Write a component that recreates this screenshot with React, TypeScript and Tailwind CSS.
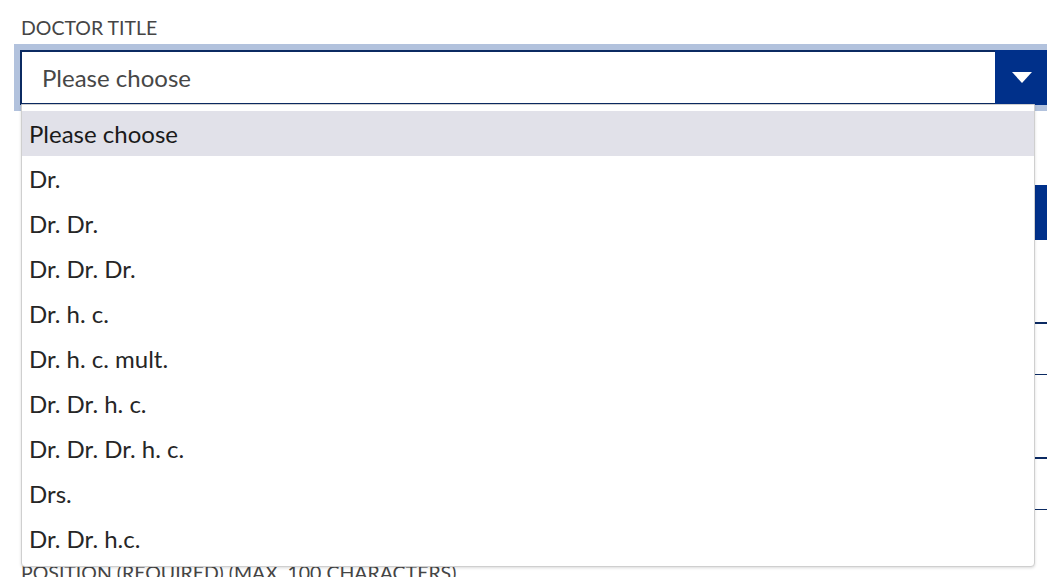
const options = [
  "Please choose",
  "Dr.",
  "Dr. Dr.",
  "Dr. Dr. Dr.",
  "Dr. h. c.",
  "Dr. h. c. mult.",
  "Dr. Dr. h. c.",
  "Dr. Dr. Dr. h. c.",
  "Drs.",
  "Dr. Dr. h.c.",
];

function FieldBox() {
  return <div className="ml-[40px] h-[53px] border-t-2 border-b border-[#0b2a62]" />;
}

export default function App() {
  return (
    <div className="relative h-[577px] w-full overflow-hidden bg-white font-['Lato','Liberation_Sans',sans-serif]">
      <div className="w-[1054px] shrink-0 pl-[20px]">
        <label className="block pl-px pt-[16px] text-[19.5px] leading-[24px] text-[#454545]">
          DOCTOR TITLE
        </label>

        {/* select with focus ring */}
        <div className="mt-[4px] -ml-[6px] border-[6px] border-[#b2c2dd]">
          <div className="flex h-[55px] border-2 border-r-0 border-[#0b2a62]">
            <div className="flex flex-1 items-center pl-[20px] text-[24px] text-[#474747]">
              Please choose
            </div>
            <div className="-my-[2px] flex w-[53px] items-center justify-center bg-[#00308a]">
              <svg width="20" height="11" viewBox="0 0 20 11">
                <path d="M0 0 H20 L10 11 Z" fill="#ffffff" />
              </svg>
            </div>
          </div>
        </div>

        {/* fields underneath the open list */}
        <div className="ml-auto mt-[74px] h-[55px] w-[320px] bg-[#00308a]" />
        <div className="mt-[82px]">
          <FieldBox />
        </div>
        <div className="mt-[82px]">
          <FieldBox />
        </div>
        <label className="mt-[51px] block pl-px text-[19.5px] leading-[24px] text-[#454545]">
          POSITION (REQUIRED) (MAX. 100 CHARACTERS)
        </label>
      </div>

      {/* open dropdown list */}
      <ul className="absolute left-[21px] top-[104px] w-[1014px] rounded-b-[4px] border border-[#cfcfcf] bg-white pt-[6px] pb-[5px] shadow-[0_1px_3px_rgba(0,0,0,0.15)]">
        {options.map((o, i) => (
          <li
            key={o}
            className={`flex h-[45px] items-center pl-[7px] text-[24px] ${
              i === 0 ? "bg-[#e1e1e9] text-[#1a1a1a]" : "text-[#262626]"
            }`}
          >
            {o}
          </li>
        ))}
      </ul>
    </div>
  );
}
